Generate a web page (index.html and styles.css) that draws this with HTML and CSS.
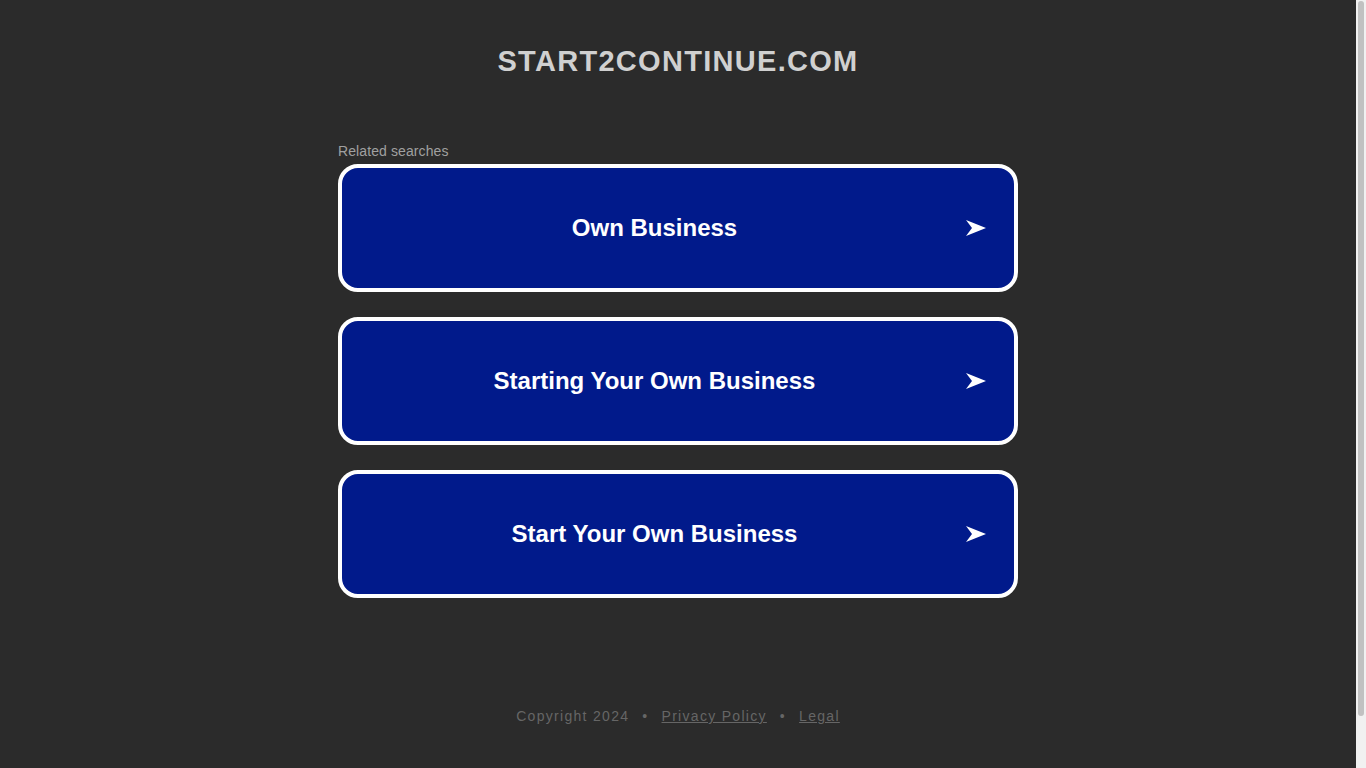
FILE: index.html
```html
<!DOCTYPE html>
<html lang="en">
<head>
<meta charset="utf-8">
<title>start2continue.com</title>
<link rel="stylesheet" href="styles.css">
</head>
<body>
<div class="page">
  <header class="header">
    <h1 class="domain">START2CONTINUE.COM</h1>
  </header>
  <main class="main">
    <div class="related">Related searches</div>
    <div class="list">
      <a class="item" href="#"><span class="label">Own Business</span><span class="arrow"><svg width="22" height="18" viewBox="0 0 22 18"><polygon points="1,1 21,9 1,17 7,9" fill="#fff"/></svg></span></a>
      <a class="item" href="#"><span class="label">Starting Your Own Business</span><span class="arrow"><svg width="22" height="18" viewBox="0 0 22 18"><polygon points="1,1 21,9 1,17 7,9" fill="#fff"/></svg></span></a>
      <a class="item" href="#"><span class="label">Start Your Own Business</span><span class="arrow"><svg width="22" height="18" viewBox="0 0 22 18"><polygon points="1,1 21,9 1,17 7,9" fill="#fff"/></svg></span></a>
    </div>
  </main>
  <footer class="footer">
    <span class="copy">Copyright 2024</span>
    <span class="dot">•</span>
    <a class="flink" href="#">Privacy Policy</a>
    <span class="dot">•</span>
    <a class="flink" href="#">Legal</a>
  </footer>
</div>
<div class="scrollbar"><div class="thumb"></div></div>
</body>
</html>
```
FILE: styles.css
```css
html, body {
  margin: 0;
  padding: 0;
  background: #2b2b2b;
  font-family: "Liberation Sans", Arial, sans-serif;
}
body {
  padding-right: 10px;
}
.scrollbar {
  position: fixed;
  top: 0;
  right: 0;
  width: 10px;
  height: 100vh;
  background: #f1f1f1;
  box-sizing: border-box;
  padding: 1px 2px 0 2px;
}
.thumb {
  height: 715px;
  background: #c1c1c1;
  border-radius: 3px;
}
.page {
  min-height: 826px;
  display: flex;
  flex-direction: column;
  align-items: center;
}
.header {
  padding-top: 43px;
}
.domain {
  margin: 0;
  font-size: 29px;
  line-height: 36px;
  font-weight: bold;
  letter-spacing: 1.3px;
  color: #d0d0d0;
  text-align: center;
}
.main {
  width: 680px;
  margin-top: 64px;
}
.related {
  font-size: 14px;
  line-height: 16px;
  color: #a0a0a0;
  letter-spacing: 0.1px;
  margin-bottom: 5px;
}
.list {
  display: flex;
  flex-direction: column;
  gap: 25px;
}
.item {
  display: flex;
  align-items: center;
  height: 120px;
  border: 4px solid #ffffff;
  border-radius: 20px;
  background: #011a8b;
  text-decoration: none;
  color: #ffffff;
}
.label {
  flex: 1;
  text-align: center;
  font-size: 24px;
  font-weight: bold;
  padding-left: 2px;
}
.arrow {
  width: 22px;
  height: 18px;
  margin-right: 27px;
  display: flex;
}
.footer {
  margin-top: 110px;
  font-size: 14px;
  line-height: 16px;
  letter-spacing: 1.3px;
  color: #666666;
  display: flex;
  gap: 13px;
}
.flink {
  color: #666666;
  text-decoration: underline;
}
.dot {
  color: #666666;
}
```
